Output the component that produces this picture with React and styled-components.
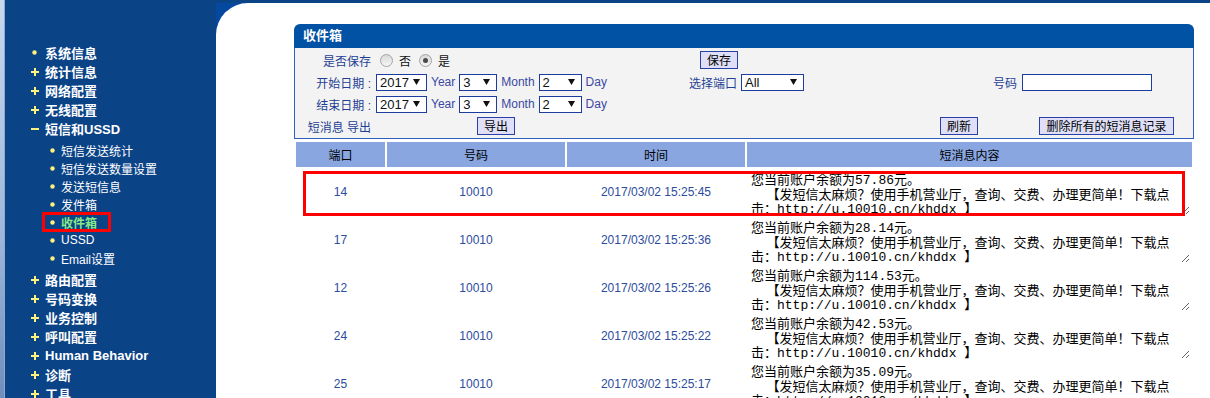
import { createGlobalStyle, styled } from 'styled-components';

const GlobalStyle = createGlobalStyle`
  html, body {
    margin: 0;
    padding: 0;
  }
  body {
    font-family: "Liberation Sans", "Noto Sans CJK SC", sans-serif;
    overflow: hidden;
  }
`;

const menu = [
  { label: '系统信息', icon: 'dot' },
  { label: '统计信息', icon: 'plus' },
  { label: '网络配置', icon: 'plus' },
  { label: '无线配置', icon: 'plus' },
  {
    label: '短信和USSD',
    icon: 'minus',
    children: ['短信发送统计', '短信发送数量设置', '发送短信息', '发件箱', '收件箱', 'USSD', 'Email设置'],
  },
  { label: '路由配置', icon: 'plus' },
  { label: '号码变换', icon: 'plus' },
  { label: '业务控制', icon: 'plus' },
  { label: '呼叫配置', icon: 'plus' },
  { label: 'Human Behavior', icon: 'plus' },
  { label: '诊断', icon: 'plus' },
  { label: '工具', icon: 'plus' },
];

const messages = [
  { port: 14, time: '2017/03/02 15:25:45', balance: '57.86' },
  { port: 17, time: '2017/03/02 15:25:36', balance: '28.14' },
  { port: 12, time: '2017/03/02 15:25:26', balance: '114.53' },
  { port: 24, time: '2017/03/02 15:25:22', balance: '42.53' },
  { port: 25, time: '2017/03/02 15:25:17', balance: '35.09' },
];

const smsText = (balance) =>
  `您当前账户余额为${balance}元。\n  【发短信太麻烦？使用手机营业厅，查询、交费、办理更简单！下载点击：http://u.10010.cn/khddx 】`;

function MenuIcon({ type }) {
  const fill = '#fff27c';
  if (type === 'plus') {
    return (
      <svg width="8" height="8" viewBox="0 0 8 8">
        <rect x="3" y="0" width="2" height="8" fill={fill} />
        <rect x="0" y="3" width="8" height="2" fill={fill} />
      </svg>
    );
  }
  if (type === 'minus') {
    return (
      <svg width="8" height="8" viewBox="0 0 8 8">
        <rect x="0" y="3" width="8" height="2" fill={fill} />
      </svg>
    );
  }
  return (
    <svg width="5" height="5" viewBox="0 0 5 5">
      <circle cx="2.5" cy="2.5" r="2.2" fill={fill} />
    </svg>
  );
}

function Arrow() {
  return (
    <svg width="7" height="6" viewBox="0 0 7 6">
      <path d="M0 0 H7 L3.5 6 Z" fill="#111" />
    </svg>
  );
}

function Select({ value, width }) {
  return (
    <FakeSelect $width={width}>
      <span>{value}</span>
      <Arrow />
    </FakeSelect>
  );
}

function DateControls() {
  return (
    <Controls>
      <Select value="2017" width={51} />
      <Unit>Year</Unit>
      <Select value="3" width={38} />
      <Unit>Month</Unit>
      <Select value="2" width={43} />
      <Unit>Day</Unit>
    </Controls>
  );
}

function App() {
  return (
    <>
      <GlobalStyle />
      <Page>
        <Sidebar>
          <Strip />
          <Menu>
            {menu.map((item) => (
              <li key={item.label}>
                <TopItem>
                  <IconBox $w={11}>
                    <MenuIcon type={item.icon} />
                  </IconBox>
                  {item.label}
                </TopItem>
                {item.children && (
                  <SubList>
                    {item.children.map((child) => (
                      <SubItem key={child}>
                        <SubLink $active={child === '收件箱'}>
                          <IconBox $w={8}>
                            <MenuIcon type="dot" />
                          </IconBox>
                          {child}
                        </SubLink>
                      </SubItem>
                    ))}
                  </SubList>
                )}
              </li>
            ))}
          </Menu>
        </Sidebar>

        <Main>
          <Content>
            <Panel>
              <PanelTitle>收件箱</PanelTitle>
              <PanelBody>
                <FormRow>
                  <Label>是否保存</Label>
                  <Cell>
                    <Radios>
                      <Radio />
                      <RadioText>否</RadioText>
                      <Radio $checked />
                      <RadioText>是</RadioText>
                    </Radios>
                  </Cell>
                  <Cell $align="end">
                    <Button>保存</Button>
                  </Cell>
                  <Cell />
                  <Cell />
                  <Cell />
                </FormRow>
                <FormRow>
                  <Label>开始日期 :</Label>
                  <Cell>
                    <DateControls />
                  </Cell>
                  <Label>选择端口</Label>
                  <Cell $pad="1px">
                    <Select value="All" width={63} />
                  </Cell>
                  <Label>号码</Label>
                  <Cell $pad="2px">
                    <TextInput />
                  </Cell>
                </FormRow>
                <FormRow>
                  <Label>结束日期 :</Label>
                  <Cell>
                    <DateControls />
                  </Cell>
                  <Cell />
                  <Cell />
                  <Cell />
                  <Cell />
                </FormRow>
                <FormRow>
                  <Label>短消息 导出</Label>
                  <Cell $align="center">
                    <Button>导出</Button>
                  </Cell>
                  <Cell />
                  <Cell $align="end">
                    <Button>刷新</Button>
                  </Cell>
                  <Cell />
                  <Cell $align="center">
                    <Button>删除所有的短消息记录</Button>
                  </Cell>
                </FormRow>
              </PanelBody>
            </Panel>

            <TableWrap>
              <Table>
                <colgroup>
                  <col style={{ width: 89 }} />
                  <col style={{ width: 178 }} />
                  <col style={{ width: 178 }} />
                  <col style={{ width: 445 }} />
                </colgroup>
                <thead>
                  <tr>
                    <Th>端口</Th>
                    <Th>号码</Th>
                    <Th>时间</Th>
                    <Th>短消息内容</Th>
                  </tr>
                </thead>
                <tbody>
                  {messages.map((m) => (
                    <tr key={m.time}>
                      <Td>{m.port}</Td>
                      <Td>10010</Td>
                      <Td>{m.time}</Td>
                      <MsgCell>
                        <Message readOnly value={smsText(m.balance)} />
                      </MsgCell>
                    </tr>
                  ))}
                </tbody>
              </Table>
              <Highlight />
            </TableWrap>
          </Content>
        </Main>
      </Page>
    </>
  );
}

export default App;

const Page = styled.div`
  display: flex;
  width: 1210px;
  height: 398px;
  overflow: hidden;
  background: #0b4387;
`;

const Sidebar = styled.nav`
  display: flex;
  width: 216px;
  flex-shrink: 0;
  background: #0b4387;
`;

const Strip = styled.div`
  width: 4px;
  border-right: 1px solid #8ea8cf;
  background: linear-gradient(to bottom, #c8d9ee, #9db6da 60%, #6f8ebd);
`;

const Menu = styled.ul`
  flex: 1;
  margin: 0;
  padding: 43px 0 0;
  list-style: none;
  color: #fff;
`;

const TopItem = styled.div`
  display: flex;
  align-items: center;
  height: 19px;
  padding-left: 24px;
  font-size: 13px;
  font-weight: bold;
  white-space: nowrap;
`;

const IconBox = styled.span`
  display: inline-flex;
  justify-content: center;
  align-items: center;
  width: ${(p) => p.$w}px;
  margin-right: 5px;
`;

const SubList = styled.ul`
  margin: 3px 0;
  padding: 0;
  list-style: none;
`;

const SubItem = styled.li`
  display: flex;
  align-items: center;
  height: 18px;
  padding-left: 37px;
  font-size: 12px;
  white-space: nowrap;
`;

const SubLink = styled.span`
  display: inline-flex;
  align-items: center;
  height: 20px;
  margin: -1px 0;
  padding: 0 11px 0 3px;
  box-sizing: border-box;
  border: 3px solid ${(p) => (p.$active ? '#ff0000' : 'transparent')};
  color: ${(p) => (p.$active ? '#86e886' : '#fff')};
  font-weight: ${(p) => (p.$active ? 'bold' : 'normal')};
`;

const Main = styled.main`
  flex: 1;
  margin-top: 3px;
  background: #0548a0;
`;

const Content = styled.div`
  height: 100%;
  padding: 21px 16px 0 78px;
  box-sizing: border-box;
  background: #fff;
  border-top-left-radius: 32px;
`;

const Panel = styled.section`
  width: 900px;
`;

const PanelTitle = styled.h2`
  margin: 0;
  height: 24px;
  padding-left: 9px;
  background: #0152a4;
  border-radius: 6px 6px 0 0;
  color: #fff;
  font-size: 13px;
  font-weight: bold;
  line-height: 23px;
`;

const PanelBody = styled.div`
  padding: 1px 0;
  background: #f3f3f3;
  border: 1px solid #2f5ebf;
  border-top: none;
  color: #1f3f94;
  font-size: 12px;
`;

const FormRow = styled.div`
  display: grid;
  grid-template-columns: 79px 244px 122px 240px 40px 1fr;
  align-items: center;
  height: 22px;
`;

const Cell = styled.div`
  display: flex;
  align-items: center;
  justify-content: ${(p) => (p.$align === 'end' ? 'flex-end' : p.$align === 'center' ? 'center' : 'flex-start')};
  padding-left: ${(p) => p.$pad || '0'};
  padding-right: ${(p) => (p.$align === 'end' ? '2px' : '0')};
`;

const Label = styled.div`
  text-align: right;
  padding-right: 3px;
  white-space: nowrap;
`;

const Controls = styled.div`
  display: flex;
  align-items: center;
  gap: 4px;
  padding-left: 2px;
`;

const Unit = styled.span`
  color: #3b47a2;
  font-size: 12px;
`;

const FakeSelect = styled.span`
  display: inline-flex;
  justify-content: space-between;
  align-items: center;
  width: ${(p) => p.$width}px;
  height: 17px;
  box-sizing: border-box;
  padding: 0 6px 0 3px;
  background: #fff;
  border: 1px solid #1c3c9e;
  color: #111;
  font-size: 13px;
  line-height: 15px;
`;

const Radios = styled.div`
  display: flex;
  align-items: center;
  padding-left: 6px;
`;

const Radio = styled.span`
  display: inline-flex;
  justify-content: center;
  align-items: center;
  width: 13px;
  height: 13px;
  box-sizing: border-box;
  border: 1px solid #a3a3a3;
  border-radius: 50%;
  background: linear-gradient(#d9d9d9, #f5f5f5);

  &::after {
    content: '';
    width: 5px;
    height: 5px;
    border-radius: 50%;
    background: ${(p) => (p.$checked ? '#4a4a4a' : 'transparent')};
  }
`;

const RadioText = styled.span`
  margin: 0 8px 0 6px;
  color: #111;
  font-size: 12px;
`;

const Button = styled.button`
  height: 18px;
  padding: 0 6px;
  margin: 0;
  background: #dfe0f7;
  border: 1px solid #2a40a6;
  border-radius: 0;
  color: #000;
  font-family: "Noto Sans CJK SC", sans-serif;
  font-size: 12px;
  line-height: 16px;
`;

const TextInput = styled.input`
  width: 130px;
  height: 17px;
  box-sizing: border-box;
  margin: 0;
  padding: 0;
  background: #fff;
  border: 1px solid #1c3c9e;
`;

const TableWrap = styled.div`
  position: relative;
  width: 900px;
  margin-top: 1px;
`;

const Table = styled.table`
  width: 900px;
  table-layout: fixed;
  border-spacing: 2px;
`;

const Th = styled.th`
  height: 25px;
  padding: 0;
  background: #89a6e1;
  color: #000;
  font-family: "Noto Sans CJK SC", sans-serif;
  font-size: 12px;
  font-weight: normal;
`;

const Td = styled.td`
  height: 46px;
  padding: 0;
  text-align: center;
  color: #2c4c9c;
  font-size: 12px;
`;

const MsgCell = styled.td`
  height: 46px;
  padding: 0;
`;

const Message = styled.textarea`
  display: block;
  width: 442px;
  height: 46px;
  margin: 0 0 0 1px;
  padding: 5px 14px 0 3px;
  box-sizing: border-box;
  border: none;
  outline: none;
  background: transparent;
  overflow: hidden;
  color: #000;
  font-family: "Liberation Mono", "Noto Sans CJK SC", monospace;
  font-size: 13px;
  line-height: 14.5px;
`;

const Highlight = styled.div`
  position: absolute;
  left: 9px;
  top: 31px;
  width: 882px;
  height: 45px;
  box-sizing: border-box;
  border: 3px solid #ff0000;
  pointer-events: none;
`;
